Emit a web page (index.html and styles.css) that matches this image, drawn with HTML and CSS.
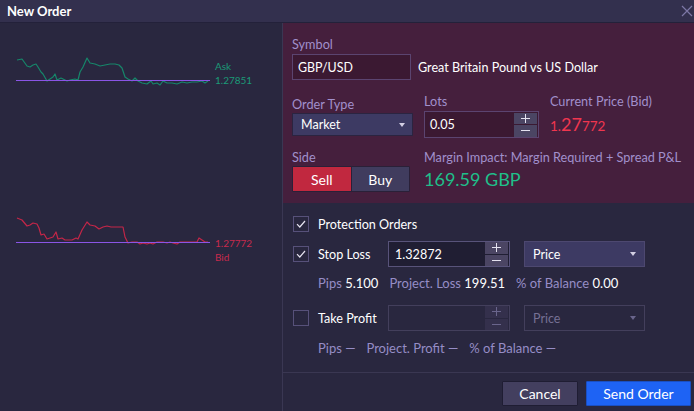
FILE: index.html
```html
<!DOCTYPE html>
<html lang="en">
<head>
<meta charset="utf-8">
<title>New Order</title>
<link rel="stylesheet" href="styles.css">
</head>
<body>
<div class="dialog">
  <header class="titlebar">
    <span class="title">New Order</span>
    <span class="close">
      <svg width="12" height="12" viewBox="0 0 12 12"><path d="M1 1 L11 11 M11 1 L1 11" stroke="#7d77a6" stroke-width="1.2" fill="none"/></svg>
    </span>
  </header>
  <div class="body">
    <aside class="charts">
      <div class="chart chart-ask">
        <svg class="chart-svg" width="210" height="40" viewBox="0 50 210 40">
          <polyline fill="none" stroke="#16866a" stroke-width="1.2" stroke-linejoin="round" points="17,60 22,59 27,66 30,67 33,65 36,64 38,67 41,72 43,74 47,81 50,79 53,77 55,74 57,80 61,78 63,79 67,81 70,80 75,79 78,80 80,72 83,67 87,58 90,63 95,64 100,66 105,65 110,64 115,64 119,65 122,68 125,77 128,79 132,81 135,78 138,81 142,83 147,84 151,81 153,84 157,83 160,85 163,81 167,83 172,83 177,84 182,82 187,83 192,82 197,82 202,81 205,83 208,81"/>
          <line x1="16" y1="80.5" x2="210" y2="80.5" stroke="#8a55e6" stroke-width="1"/>
        </svg>
        <div class="chart-labels ask">
          <span>Ask</span>
          <span>1.27851</span>
        </div>
      </div>
      <div class="chart chart-bid">
        <svg class="chart-svg" width="210" height="40" viewBox="0 210 210 40">
          <polyline fill="none" stroke="#c42648" stroke-width="1.2" stroke-linejoin="round" points="17,218 22,220 27,226 30,225 33,223 37,224 39,228 41,235 44,234 47,239 50,238 53,237 56,232 58,239 62,238 65,240 72,240 76,238 78,239 82,230 87,222 90,225 95,226 99,229 103,227 107,226 111,227 115,227 123,227 125,237 128,243 132,242 137,242 140,244 143,243 147,244 150,243 153,244 157,242 160,242 163,242 167,243 170,242 173,243 177,244 180,242 187,242 193,242 197,242 199,238 202,240 205,242 208,242"/>
          <line x1="16" y1="242.5" x2="210" y2="242.5" stroke="#8a55e6" stroke-width="1"/>
        </svg>
        <div class="chart-labels bid">
          <span>1.27772</span>
          <span>Bid</span>
        </div>
      </div>
    </aside>

    <main class="order">
      <section class="order-top">
        <div class="field">
          <div class="label">Symbol</div>
          <div class="symbol-row">
            <div class="symbol-input">GBP/USD</div>
            <span class="symbol-desc">Great Britain Pound vs US Dollar</span>
          </div>
        </div>

        <div class="grid row2">
          <div class="col col-type">
            <div class="label">Order Type</div>
            <div class="select select-type">
              <span>Market</span><i class="caret"></i>
            </div>
          </div>
          <div class="col col-lots">
            <div class="label">Lots</div>
            <div class="num-input lots-input">
              <span class="num-value">0.05</span>
              <span class="stepper">
                <span class="step"><svg width="9" height="9" viewBox="0 0 9 9"><path d="M0 4.5H9M4.5 0V9" stroke="#e4e1ef" stroke-width="1"/></svg></span>
                <span class="step"><svg width="9" height="9" viewBox="0 0 9 9"><path d="M0 4.5H9" stroke="#e4e1ef" stroke-width="1"/></svg></span>
              </span>
            </div>
          </div>
          <div class="col col-price">
            <div class="label">Current Price (Bid)</div>
            <div class="price"><span class="p-small">1.</span><span class="p-big">27</span><span class="p-small">772</span></div>
          </div>
        </div>

        <div class="grid row3">
          <div class="col">
            <div class="label">Side</div>
            <div class="side">
              <span class="side-btn sell">Sell</span>
              <span class="side-btn buy">Buy</span>
            </div>
          </div>
          <div class="col col-margin">
            <div class="label">Margin Impact: Margin Required + Spread P&amp;L</div>
            <div class="margin-value">169.59 GBP</div>
          </div>
        </div>
      </section>

      <section class="protection">
        <div class="check-row protect-row">
          <span class="checkbox checked"><svg width="10" height="8" viewBox="0 0 10 8"><path d="M1 4.2 L3.8 7 L9 1" stroke="#e6e3f0" stroke-width="1.2" fill="none"/></svg></span>
          <span class="check-label">Protection Orders</span>
        </div>

        <div class="check-row order-row stop-row">
          <span class="checkbox checked"><svg width="10" height="8" viewBox="0 0 10 8"><path d="M1 4.2 L3.8 7 L9 1" stroke="#e6e3f0" stroke-width="1.2" fill="none"/></svg></span>
          <span class="check-label fixed">Stop Loss</span>
          <div class="num-input sl-input">
            <span class="num-value">1.32872</span>
            <span class="stepper">
              <span class="step"><svg width="9" height="9" viewBox="0 0 9 9"><path d="M0 4.5H9M4.5 0V9" stroke="#e4e1ef" stroke-width="1"/></svg></span>
              <span class="step"><svg width="9" height="9" viewBox="0 0 9 9"><path d="M0 4.5H9" stroke="#e4e1ef" stroke-width="1"/></svg></span>
            </span>
          </div>
          <div class="select select-price">
            <span>Price</span><i class="caret"></i>
          </div>
        </div>

        <div class="stats stats-sl">
          <span class="stat"><span class="stat-l">Pips</span> <span class="stat-v">5.100</span></span>
          <span class="stat"><span class="stat-l">Project. Loss</span> <span class="stat-v">199.51</span></span>
          <span class="stat"><span class="stat-l">% of Balance</span> <span class="stat-v">0.00</span></span>
        </div>

        <div class="check-row order-row take-row">
          <span class="checkbox"></span>
          <span class="check-label fixed">Take Profit</span>
          <div class="num-input sl-input disabled">
            <span class="num-value"></span>
            <span class="stepper">
              <span class="step"><svg width="9" height="9" viewBox="0 0 9 9"><path d="M0 4.5H9M4.5 0V9" stroke="#6a658c" stroke-width="1"/></svg></span>
              <span class="step"><svg width="9" height="9" viewBox="0 0 9 9"><path d="M0 4.5H9" stroke="#6a658c" stroke-width="1"/></svg></span>
            </span>
          </div>
          <div class="select select-price disabled">
            <span>Price</span><i class="caret"></i>
          </div>
        </div>

        <div class="stats stats-tp">
          <span class="stat"><span class="stat-l">Pips —</span></span>
          <span class="stat"><span class="stat-l">Project. Profit —</span></span>
          <span class="stat"><span class="stat-l">% of Balance —</span></span>
        </div>
      </section>

      <footer class="actions">
        <button class="btn btn-cancel">Cancel</button>
        <button class="btn btn-send">Send Order</button>
      </footer>
    </main>
  </div>
</div>
</body>
</html>
```

FILE: styles.css
```css
* {
  box-sizing: border-box;
  margin: 0;
  padding: 0;
}

html, body {
  width: 694px;
  height: 411px;
  overflow: hidden;
  background: #29273f;
  font-family: Lato, "Open Sans", sans-serif;
}

.dialog {
  display: flex;
  flex-direction: column;
  height: 411px;
}

.titlebar {
  height: 23px;
  flex: none;
  background: #33304e;
  border-bottom: 1px solid #23213a;
  display: flex;
  align-items: center;
  justify-content: space-between;
  padding: 0 1px 0 7px;
}

.title {
  color: #ffffff;
  font-weight: 700;
  font-size: 13px;
  line-height: 16px;
}

.close {
  display: flex;
  width: 12px;
  height: 12px;
}

.body {
  flex: 1;
  display: flex;
  min-height: 0;
}

/* charts */
.charts {
  width: 282px;
  flex: none;
  padding-top: 27px;
  background: #29273f;
}

.chart {
  display: flex;
  align-items: flex-start;
  height: 40px;
}

.chart-bid {
  margin-top: 120px;
}

.chart-svg {
  display: block;
  flex: none;
}

.chart-labels {
  display: flex;
  flex-direction: column;
  margin-left: 5px;
  font-size: 10px;
  line-height: 14px;
}

.chart-labels.ask {
  padding-top: 9px;
  color: #1b9a77;
}

.chart-labels.bid {
  padding-top: 26px;
  color: #c82a4d;
}

/* order panel */
.order {
  width: 412px;
  flex: none;
  border-left: 1px solid #3a3753;
  display: flex;
  flex-direction: column;
}

.order-top {
  height: 180px;
  flex: none;
  background: #451f3d;
  padding: 13px 9px 0 9px;
}

.label {
  font-size: 12.7px;
  line-height: 16px;
  color: #a190cc;
  white-space: nowrap;
}

.symbol-row {
  display: flex;
  align-items: center;
  margin-top: 2px;
}

.symbol-input {
  width: 119px;
  height: 26px;
  border: 1px solid #5b4470;
  background: #3b1932;
  color: #ffffff;
  font-size: 12.4px;
  padding-left: 5px;
  display: flex;
  align-items: center;
}

.symbol-desc {
  margin-left: 7px;
  color: #ffffff;
  font-size: 12.6px;
}

.grid {
  display: grid;
  grid-template-columns: 121px 115px 1fr;
  column-gap: 11px;
  align-items: start;
}

.row2 {
  margin-top: 13px;
}

.row3 {
  margin-top: 11px;
}

.col-type .label {
  margin-top: 3px;
}

.select {
  display: flex;
  align-items: center;
  justify-content: space-between;
  background: #3d3a63;
  border: 1px solid #2b2440;
  color: #ffffff;
  font-size: 12.5px;
  padding: 0 7px 0 8px;
}

.select-type {
  height: 23px;
  margin-top: 1px;
}

.caret {
  display: block;
  width: 0;
  height: 0;
  border-left: 3.5px solid transparent;
  border-right: 3.5px solid transparent;
  border-top: 4px solid #d3cfe3;
}

.num-input {
  display: flex;
  align-items: center;
  justify-content: space-between;
  border: 1px solid #5b4470;
  background: #3b1932;
  padding: 0 1px 0 5px;
}

.lots-input {
  height: 27px;
  margin-top: 2px;
}

.num-value {
  color: #ffffff;
  font-size: 12.6px;
}

.stepper {
  display: flex;
  flex-direction: column;
  gap: 1px;
}

.step {
  width: 23px;
  height: 11.5px;
  background: #4b4563;
  display: flex;
  align-items: center;
  justify-content: center;
}

.price {
  margin-top: 2px;
  height: 27px;
  display: flex;
  align-items: baseline;
  line-height: 27px;
  color: #f0364f;
}

.p-small {
  font-size: 13.5px;
}

.p-big {
  font-size: 18px;
}

.col-margin {
  grid-column: 2 / 4;
}

.side {
  display: flex;
  margin-top: 1px;
  height: 26px;
  width: 118px;
  border: 1px solid #2a2038;
  border-radius: 1px;
  overflow: hidden;
}

.side-btn {
  flex: 1;
  display: flex;
  align-items: center;
  justify-content: center;
  color: #ffffff;
  font-size: 14px;
}

.sell {
  background: #c1283f;
  border-right: 1px solid #2a2038;
}

.buy {
  background: #403c5e;
}

.margin-value {
  margin-top: 1px;
  line-height: 26px;
  font-size: 18px;
  color: #1fbf8a;
}

/* protection */
.protection {
  flex: 1;
  padding: 12px 0 0 10px;
}

.check-row {
  display: flex;
  align-items: center;
}

.protect-row {
  height: 18px;
}

.checkbox {
  width: 16px;
  height: 16px;
  flex: none;
  border: 1px solid #57517a;
  display: flex;
  align-items: center;
  justify-content: center;
  margin-right: 9px;
}

.check-label {
  color: #ffffff;
  font-size: 12.6px;
}

.check-label.fixed {
  width: 70px;
  flex: none;
}

.order-row {
  height: 26px;
}

.stop-row {
  margin-top: 8px;
}

.take-row {
  margin-top: 14px;
}

.sl-input {
  width: 122px;
  height: 26px;
  background: #201e33;
  border-color: #58537a;
  padding-left: 6px;
}

.sl-input.disabled {
  background: transparent;
  border-color: #433f5c;
}

.sl-input.disabled .step {
  background: #34304c;
}

.select-price {
  width: 121px;
  height: 26px;
  margin-left: 14px;
  border-color: #4d4870;
  padding-right: 8px;
}

.select-price.disabled {
  background: transparent;
  border-color: #433f5c;
  color: #767194;
}

.select-price.disabled .caret {
  border-top-color: #6a658c;
}

.stats {
  display: flex;
  gap: 11px;
  padding-left: 25px;
  font-size: 13px;
  line-height: 16px;
}

.stats-sl {
  margin-top: 8px;
}

.stats-tp {
  margin-top: 9px;
}

.stat-l {
  color: #968dc6;
}

.stat-v {
  color: #ffffff;
}

/* footer */
.actions {
  height: 39px;
  flex: none;
  border-top: 1px solid #3a3752;
  display: flex;
  justify-content: flex-end;
  gap: 8px;
  padding: 8px 3px 0 0;
}

.btn {
  height: 25px;
  font-family: Lato, "Open Sans", sans-serif;
  font-size: 14px;
  color: #ffffff;
  border-radius: 1px;
  cursor: pointer;
}

.btn-cancel {
  width: 76px;
  background: #433f5f;
  border: 1px solid #1f1d33;
}

.btn-send {
  width: 105px;
  background: #1e63f4;
  border: 1px solid #1a4fc2;
}
```
